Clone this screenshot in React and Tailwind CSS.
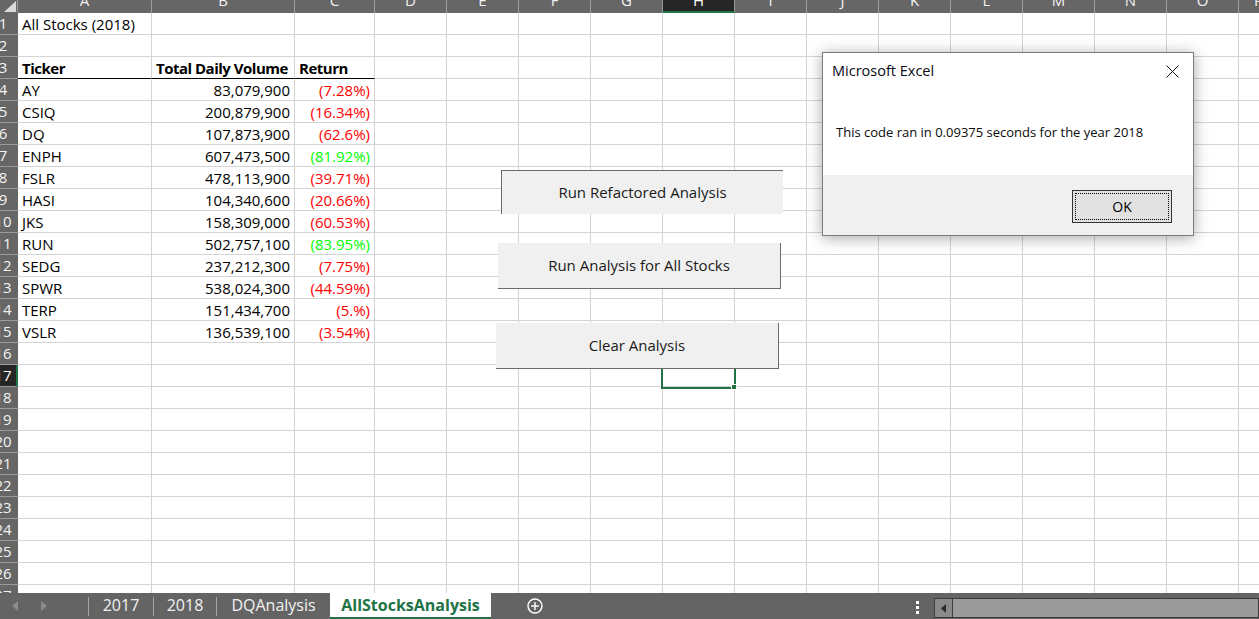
import React from "react";

// column widths taken from the sheet, P is only partly visible
const COLS = [
  { l: "A", w: "w-[134px]" },
  { l: "B", w: "w-[143px]" },
  { l: "C", w: "w-[80px]" },
  { l: "D", w: "w-[72px]" },
  { l: "E", w: "w-[72px]" },
  { l: "F", w: "w-[72px]" },
  { l: "G", w: "w-[72px]" },
  { l: "H", w: "w-[72px]" },
  { l: "I", w: "w-[72px]" },
  { l: "J", w: "w-[72px]" },
  { l: "K", w: "w-[72px]" },
  { l: "L", w: "w-[72px]" },
  { l: "M", w: "w-[72px]" },
  { l: "N", w: "w-[72px]" },
  { l: "O", w: "w-[72px]" },
  { l: "P", w: "w-[40px]" },
];

const STOCKS = [
  ["AY", "83,079,900", "(7.28%)", false],
  ["CSIQ", "200,879,900", "(16.34%)", false],
  ["DQ", "107,873,900", "(62.6%)", false],
  ["ENPH", "607,473,500", "(81.92%)", true],
  ["FSLR", "478,113,900", "(39.71%)", false],
  ["HASI", "104,340,600", "(20.66%)", false],
  ["JKS", "158,309,000", "(60.53%)", false],
  ["RUN", "502,757,100", "(83.95%)", true],
  ["SEDG", "237,212,300", "(7.75%)", false],
  ["SPWR", "538,024,300", "(44.59%)", false],
  ["TERP", "151,434,700", "(5.%)", false],
  ["VSLR", "136,539,100", "(3.54%)", false],
];

const ROWS = Array.from({ length: 27 }, (_, i) => i + 1);

const cellText = (row, col) => {
  if (row === 1 && col === 0) return { text: "All Stocks (2018)" };
  if (row === 3) {
    if (col === 0) return { text: "Ticker", bold: true };
    if (col === 1) return { text: "Total Daily Volume", bold: true };
    if (col === 2) return { text: "Return", bold: true };
  }
  const s = STOCKS[row - 4];
  if (s) {
    if (col === 0) return { text: s[0] };
    if (col === 1) return { text: s[1], right: true };
    if (col === 2) return { text: s[2], right: true, color: s[3] ? "text-[#00ff00]" : "text-[#ff0000]" };
  }
  return null;
};

const ColumnHeader = () => (
  <div className="flex h-[13px] shrink-0 bg-[#666666]">
    <div className="w-[18px] shrink-0 h-full border-r border-[#9a9a9a]">
      <svg width="17" height="13" viewBox="0 0 17 13">
        <polygon points="4,12 16,12 16,1" fill="#d9d9d9" />
      </svg>
    </div>
    {COLS.map((c) => (
      <div
        key={c.l}
        className={`${c.w} shrink-0 h-full overflow-hidden text-center border-r border-[#9a9a9a] ${
          c.l === "H" ? "bg-[#262626] border-b-2 border-b-[#217346] text-white" : "text-[#f2f2f2]"
        }`}
      >
        <div className="-mt-[8px] leading-[17px]">{c.l}</div>
      </div>
    ))}
  </div>
);

const Row = ({ r }) => (
  <div className="flex h-[22px] shrink-0">
    <div
      className={`w-[18px] shrink-0 h-full overflow-hidden border-b border-[#9a9a9a] ${
        r === 17 ? "bg-[#262626] border-r-2 border-r-[#217346] text-white" : "bg-[#666666] text-[#f4f4f4]"
      }`}
    >
      <div className="w-[30px] -ml-[12px] text-center leading-[21px]">{r}</div>
    </div>
    {COLS.map((c, i) => {
      const t = cellText(r, i);
      const blackLine = r === 3 && i < 3;
      return (
        <div
          key={c.l}
          className={`${c.w} shrink-0 h-full flex items-end pb-[1px] px-[4px] whitespace-nowrap border-r border-b border-r-[#d4d4d4] ${
            blackLine ? "border-b-black" : "border-b-[#d4d4d4]"
          } ${t && t.right ? "justify-end" : "justify-start"}`}
        >
          {t && (
            <span
              className={`leading-[17px] ${t.bold ? "font-bold tracking-[-0.5px]" : ""} ${
                t.color || "text-black"
              }`}
            >
              {t.text}
            </span>
          )}
        </div>
      );
    })}
  </div>
);

const SheetButton = ({ className, label }) => (
  <div
    className={`absolute flex items-center justify-center bg-[#f0f0f0] text-[15px] text-[#1a1a1a] ${className}`}
  >
    {label}
  </div>
);

const TabBar = () => (
  <div className="flex h-[26px] shrink-0 bg-[#646464] text-[16px] text-[#f2f2f2]">
    <div className="w-[88px] shrink-0 flex items-center">
      <svg className="ml-[12px]" width="6" height="10" viewBox="0 0 6 10">
        <polygon points="6,0 6,10 0,5" fill="#8c8c8c" />
      </svg>
      <svg className="ml-[23px]" width="6" height="10" viewBox="0 0 6 10">
        <polygon points="0,0 0,10 6,5" fill="#8c8c8c" />
      </svg>
    </div>
    <div className="w-px h-[19px] mt-[4px] bg-[#a6a6a6]" />
    <div className="w-[64px] flex items-center justify-center pb-[3px]">2017</div>
    <div className="w-px h-[19px] mt-[4px] bg-[#a6a6a6]" />
    <div className="w-[62px] flex items-center justify-center pb-[3px]">2018</div>
    <div className="w-px h-[19px] mt-[4px] bg-[#a6a6a6]" />
    <div className="w-[113px] flex items-center justify-center pb-[3px]">DQAnalysis</div>
    <div className="w-[161px] bg-white border-b-2 border-[#217346] flex items-center justify-center pb-[1px] font-bold text-[#217346]">
      AllStocksAnalysis
    </div>
    <div className="ml-[36px] flex items-center">
      <svg width="16" height="16" viewBox="0 0 16 16">
        <circle cx="8" cy="8" r="7" fill="none" stroke="#ffffff" strokeWidth="1.4" />
        <line x1="8" y1="4" x2="8" y2="12" stroke="#ffffff" strokeWidth="1.4" />
        <line x1="4" y1="8" x2="12" y2="8" stroke="#ffffff" strokeWidth="1.4" />
      </svg>
    </div>
    <div className="flex-1" />
    <div className="w-[34px] flex flex-col items-center justify-center gap-[2px] pt-[2px]">
      <div className="w-[3px] h-[3px] bg-white" />
      <div className="w-[3px] h-[3px] bg-white" />
      <div className="w-[3px] h-[3px] bg-white" />
    </div>
    <div className="w-[325px] h-[20px] mt-[5px] flex border border-[#3c3c3c] bg-[#9a9a9a]">
      <div className="w-[18px] h-full flex items-center justify-center bg-[#8a8a8a] border-r border-[#3c3c3c]">
        <svg width="5" height="9" viewBox="0 0 5 9">
          <polygon points="5,0 5,9 0,4.5" fill="#2b2b2b" />
        </svg>
      </div>
    </div>
  </div>
);

const Dialog = () => (
  <div className="absolute left-[822px] top-[52px] w-[372px] h-[184px] flex flex-col bg-white border border-[#7a7a7a] shadow-[0_2px_14px_rgba(0,0,0,0.35)] font-['Open_Sans','Liberation_Sans',sans-serif]">
    <div className="h-[122px] flex flex-col">
      <div className="flex items-center justify-between h-[36px] pl-[9px] pr-[14px]">
        <span className="text-[14.5px] text-[#0a0a14]">Microsoft Excel</span>
        <svg width="13" height="13" viewBox="0 0 13 13">
          <line x1="0.5" y1="0.5" x2="12.5" y2="12.5" stroke="#111" strokeWidth="1" />
          <line x1="12.5" y1="0.5" x2="0.5" y2="12.5" stroke="#111" strokeWidth="1" />
        </svg>
      </div>
      <div className="pl-[13px] mt-[34px] text-[13px] leading-[18px] text-[#0a0a0a]">
        This code ran in 0.09375 seconds for the year 2018
      </div>
    </div>
    <div className="flex-1 bg-[#f0f0f0] flex items-start justify-end pr-[21px] pt-[15px]">
      <div className="w-[100px] h-[33px] border border-[#333333] bg-[#e1e1e1] p-[2px]">
        <div className="w-full h-full border border-dotted border-black flex items-center justify-center text-[14px] text-black">
          OK
        </div>
      </div>
    </div>
  </div>
);

export default function App() {
  return (
    <div className="relative w-[1259px] h-[619px] overflow-hidden flex flex-col bg-white font-['Open_Sans','Liberation_Sans',sans-serif] text-[15px]">
      <ColumnHeader />
      <div className="flex-1 overflow-hidden flex flex-col">
        {ROWS.map((r) => (
          <Row key={r} r={r} />
        ))}
      </div>
      <TabBar />

      {/* selected cell H17, partly under the button */}
      <div className="absolute left-[661px] top-[364px] w-[75px] h-[25px] border-2 border-[#217346]" />
      <div className="absolute left-[731px] top-[384px] w-[6px] h-[6px] bg-[#217346] border border-white" />

      <SheetButton className="left-[501px] top-[170px] w-[282px] h-[44px] border-t border-l border-[#6b6b6b]" label="Run Refactored Analysis" />
      <SheetButton className="left-[498px] top-[243px] w-[283px] h-[46px] border-r border-b border-[#6b6b6b]" label="Run Analysis for All Stocks" />
      <SheetButton className="left-[496px] top-[323px] w-[283px] h-[46px] border-r border-b border-[#6b6b6b]" label="Clear Analysis" />

      <Dialog />
    </div>
  );
}
